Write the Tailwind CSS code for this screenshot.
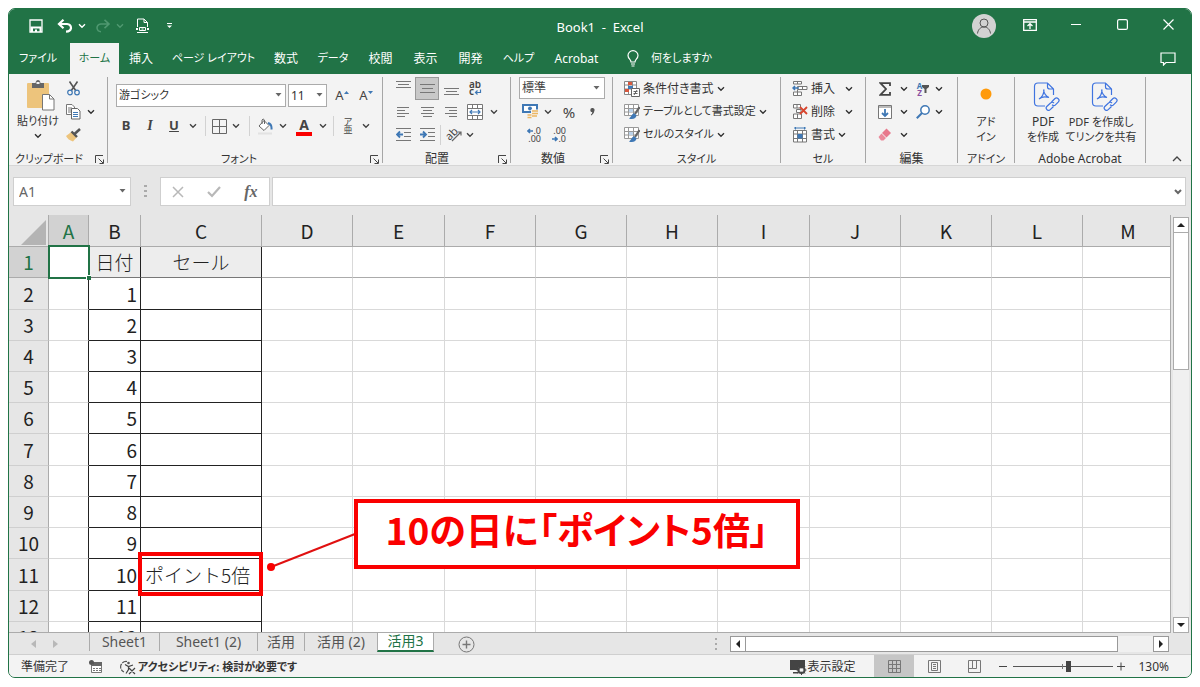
<!DOCTYPE html>
<html lang="ja">
<head>
<meta charset="utf-8">
<title>Book1 - Excel</title>
<script src="https://cdn.jsdelivr.net/npm/@tailwindcss/browser@4"></script>
</head>
<body class="flex h-screen flex-col bg-white px-2 pt-2 pb-[9px] text-xs text-[#333] font-['Noto_Sans','Noto_Sans_CJK_JP',sans-serif] [font-feature-settings:'palt']">

<svg class="hidden">
  <symbol id="chev" viewBox="0 0 8 6"><path d="M1 1.2 4 4.2 7 1.2" fill="none" stroke="currentColor" stroke-width="1.4"/></symbol>
  <symbol id="launch" viewBox="0 0 9 9"><path d="M.5 8V.5H8M3.500 3.500 8 8M8.500 4.500V8.500H4.500" fill="none" stroke="#444"/></symbol>
  <symbol id="tri" viewBox="0 0 7 4"><path d="M.5 0H6.500L3.500 3.500Z" fill="#666"/></symbol>
  <symbol id="tablefmt" viewBox="0 0 16 16"><path d="M.5 .5H14.500V11.500H.5ZM.5 4.500H14.500M.5 8H14.500M4.500 .5V11.500M9.500 .5V11.500" fill="#fff" stroke="#999"/><rect x="5" y="5" width="4" height="3" fill="#bcd3ea"/><path d="M15.500 3 11 10" stroke="#666" stroke-width="2.200"/><path d="M10.500 9.500C8 9 8 12 5 14.500 8.500 16 12.500 14.500 12.500 11Z" fill="#3f78b5"/></symbol>
  <symbol id="pdf" viewBox="0 0 27 29"><g fill="none" stroke="#3f74e0" stroke-width="1.200"><path d="M12 24H5Q1.500 24 1.500 20.500V4.500Q1.500 1 5 1H14.500L20.500 7V13M14.500 1V5Q14.500 7 17 7H20.500"/><path d="M10.500 7.500Q11 13 16 15.500M11 7.500Q11 14 6 17M6 17Q10 13.500 16 15.500"/><path d="m18.500 20 3.500-3.500q1.500-1.300 3.200.2t.2 3.200L22.500 22.800q-1.500 1.500-3.500 0"/><path d="M21 21q-1.500-1.500-3.500 0L13.800 24.500q-1.500 1.700.2 3.200t3.200 0L20.500 24.500"/></g></symbol>
</svg>

<div class="flex min-h-0 flex-1 flex-col overflow-hidden rounded-[7px] border border-[#217346] bg-[#e6e6e6]">

  <!-- Title bar -->
  <header class="flex h-[34px] shrink-0 items-center bg-[#217346] text-white">
    <div class="flex flex-1 items-center">
      <button aria-label="上書き保存" class="ml-[15px] flex w-6 justify-center"><svg width="14" height="14" viewBox="0 0 14 14"><path d="M1 1H13V13H1Z" fill="none" stroke="#fff" stroke-width="1.300"/><path d="M1.500 7.500H12.500V13H10.500V9.500H4V13H1.500Z" fill="#fff"/><path d="M6 10.500H8V13H6Z" fill="#fff"/></svg></button>
      <button aria-label="元に戻す" class="ml-[6px] flex w-[22px] justify-center"><svg width="16" height="14" viewBox="0 0 16 14"><path d="M1.500 5H10Q14 5.500 14 9 13.500 12.500 9 12.700M6.500 .8 2 5 6.500 9.200" fill="none" stroke="#fff" stroke-width="2.200"/></svg></button>
      <button aria-label="元に戻す一覧" class="flex w-3 justify-center"><svg width="8" height="6"><use href="#chev"/></svg></button>
      <button aria-label="やり直し" class="ml-1 flex w-[22px] justify-center text-[#4f9870]"><svg width="16" height="14" viewBox="0 0 16 14"><path d="M14.500 5H6Q2 5.500 2 9 2.500 12.500 6 12.700M9.500 .8 14 5 9.500 9.200" fill="none" stroke="currentColor" stroke-width="1.600"/></svg></button>
      <button aria-label="やり直し一覧" class="flex w-3 justify-center text-[#4f9870]"><svg width="8" height="6"><use href="#chev"/></svg></button>
      <button aria-label="印刷プレビュー" class="ml-1 flex w-6 justify-center"><svg width="13" height="16" viewBox="0 0 13 16"><path d="M1.500 9V1H8L11.500 4.500V9M8 1V4.500H11.500" fill="none" stroke="#fff"/><path d="M0 10H2V12H0ZM11 10H13V12H11Z" fill="#fff"/><path d="M1 14.500H12" stroke="#fff"/><path d="M3.500 9.500H9.500V12.500H3.500ZM5.500 11H7.500" fill="none" stroke="#fff"/></svg></button>
      <button aria-label="クイック アクセス ツール バーのカスタマイズ" class="ml-[5px] flex w-5 justify-center"><svg width="7" height="6" viewBox="0 0 7 6"><path d="M1 .5H6" stroke="#fff"/><path d="M1 2.500H6L3.500 5Z" fill="#fff"/></svg></button>
    </div>
    <h1 class="pt-[3px] text-[13px] whitespace-pre">Book1  -  Excel</h1>
    <div class="flex flex-1 justify-end">
      <button aria-label="アカウント" class="flex w-[46px] items-center justify-center"><svg width="24" height="24" viewBox="0 0 24 24"><circle cx="12" cy="12" r="12" fill="#d2d2d2"/><circle cx="12" cy="9" r="4" fill="none" stroke="#555"/><path d="M5.500 19.500C6 15.500 8.500 13 12 13S18 15.500 18.500 19.500" fill="none" stroke="#555"/></svg></button>
      <button aria-label="リボンの表示オプション" class="-mt-[3px] flex w-[46px] items-center justify-center"><svg width="14" height="12" viewBox="0 0 14 12"><path d="M.7 .7H13.300V11.300H.7ZM.7 3H13.300M7 10V5M4.500 7 7 4.700 9.500 7" fill="none" stroke="#fff" stroke-width="1.300"/></svg></button>
      <button aria-label="最小化" class="-mt-[3px] flex w-[46px] items-center justify-center"><svg width="10" height="10"><path d="M0 4.500H10" stroke="#fff"/></svg></button>
      <button aria-label="最大化" class="-mt-[3px] flex w-[46px] items-center justify-center"><svg width="11" height="11"><rect x=".6" y=".6" width="9.800" height="9.800" rx="1.500" fill="none" stroke="#fff" stroke-width="1.200"/></svg></button>
      <button aria-label="閉じる" class="-mt-[3px] flex w-[46px] items-center justify-center"><svg width="11" height="11"><path d="M.5 .5 10.500 10.500M10.500 .5 .5 10.500" stroke="#fff" stroke-width="1.200"/></svg></button>
    </div>
  </header>

  <!-- Ribbon tabs -->
  <nav class="flex h-[31px] shrink-0 items-stretch bg-[#217346] text-xs text-white">
    <button class="w-[61px] pr-[3px] text-[11px]">ファイル</button>
    <button class="w-[49px] bg-[#f3f3f3] text-[11px] text-[#217346]">ホーム</button>
    <button class="w-11">挿入</button>
    <button class="w-[101px] text-[11px] whitespace-nowrap">ページ レイアウト</button>
    <button class="w-11">数式</button>
    <button class="w-[50px] text-[11px]">データ</button>
    <button class="w-[45px]">校閲</button>
    <button class="w-[45px]">表示</button>
    <button class="w-[45px]">開発</button>
    <button class="w-[51px] text-[11px]">ヘルプ</button>
    <button class="w-[65px]">Acrobat</button>
    <button class="ml-[18px] flex items-center gap-3 text-[11px]"><svg width="12" height="17" viewBox="0 0 12 17"><path d="M4 12C4 9.500 1 8.800 1 5.500A5 4.800 0 0 1 11 5.500C11 8.800 8 9.500 8 12ZM4 14H8M4.500 16H7.500" fill="none" stroke="#fff" stroke-width="1.200"/></svg>何をしますか</button>
    <button aria-label="コメント" class="mr-[15px] ml-auto"><svg width="16" height="14" viewBox="0 0 16 14"><path d="M1 1H15V10.500H6L3.500 13V10.500H1Z" fill="none" stroke="#fff" stroke-width="1.200"/></svg></button>
  </nav>

  <!-- Ribbon -->
  <section class="flex h-[92px] shrink-0 border-b border-[#d6d6d6] bg-[#f3f3f3] pt-[3px] [&>div]:h-[86px] [&>div]:shrink-0 [&>div]:border-r [&>div]:border-[#a6a6a6]">

    <div class="w-[99px]">
      <div class="flex h-[69px]">
        <button class="ml-1 flex w-[50px] flex-col items-center">
          <svg class="mt-[3px] ml-[6px]" width="28" height="31" viewBox="0 0 28 31"><rect x="0" y="3" width="22" height="25" rx="1" fill="#edc47c"/><path d="M5 8V3H8.500Q9 0 11 0T13.500 3H17V8Z" fill="#666"/><rect x="9.500" y="2" width="3" height="2" fill="#f3f3f3"/><path d="M15.500 14.500H22.500L27 19V30H15.500Z" fill="#fff" stroke="#777"/><path d="M22.500 14.500V19H27" fill="none" stroke="#777"/></svg>
          <span class="text-[11px] leading-5">貼り付け</span>
          <svg class="mt-[2px]" width="8" height="6"><use href="#chev"/></svg>
        </button>
        <div class="grid w-5 grid-rows-3 place-items-center">
          <button aria-label="切り取り"><svg width="13" height="15" viewBox="0 0 13 15"><path d="M2.500 .5 9 10M10.500 .5 4 10" stroke="#555" stroke-width="1.600"/><circle cx="3" cy="11.500" r="2.300" fill="none" stroke="#3f78b5" stroke-width="1.200"/><circle cx="10" cy="11.500" r="2.300" fill="none" stroke="#3f78b5" stroke-width="1.200"/></svg></button>
          <button aria-label="コピー"><svg width="15" height="16" viewBox="0 0 15 16"><path d="M.5 .5H6L8.500 3V10.500H.5ZM2 4H6M2 6H5M2 8H5" fill="#fff" stroke="#777"/><path d="M5.500 4.500H11.500L14 7V15H5.500Z" fill="#fff" stroke="#666"/><path d="M7 8.500H12M7 10.500H12M7 12.500H12" stroke="#3f78b5"/></svg></button>
          <button aria-label="書式のコピー"><svg width="15" height="14" viewBox="0 0 15 14"><path d="M0 8 6 3.500 11 9 7 13.500Q2 12 0 8Z" fill="#edc47c"/><path d="M5.500 3.500 11 9" stroke="#555" stroke-width="2.400"/><path d="M8.500 6 14 1" stroke="#555" stroke-width="2.500"/></svg></button>
        </div>
        <button aria-label="コピーのオプション" class="w-[14px] pl-1"><svg width="8" height="6"><use href="#chev"/></svg></button>
      </div>
      <div class="flex items-center pt-[3px] text-[11px] leading-[20px]"><span class="w-[80px] text-center">クリップボード</span><button aria-label="クリップボードの設定" class="ml-[6px]"><svg width="9" height="9"><use href="#launch"/></svg></button></div>
    </div>

    <div class="w-[275px]">
      <div class="flex h-[69px] flex-col pt-[7px]">
        <div class="flex h-[23px] items-center gap-[2px] pl-2">
          <label class="relative"><select aria-label="フォント" class="h-[23px] w-[170px] appearance-none border border-[#ababab] bg-white pl-[2px] text-[11px]"><option>游ゴシック</option></select><svg class="pointer-events-none absolute top-[9px] right-1" width="7" height="4"><use href="#tri"/></svg></label>
          <label class="relative"><select aria-label="フォント サイズ" class="h-[23px] w-[39px] appearance-none border border-[#ababab] bg-white pl-[2px]"><option>11</option></select><svg class="pointer-events-none absolute top-[9px] right-1" width="7" height="4"><use href="#tri"/></svg></label>
          <button aria-label="フォント サイズの拡大" class="ml-[2px] flex w-[22px] justify-center text-[13px] text-[#444]">A<svg class="mt-1" width="5" height="4"><path d="M0 3 2.500 0 5 3Z" fill="#3f78b5"/></svg></button>
          <button aria-label="フォント サイズの縮小" class="flex w-[22px] justify-center text-[13px] text-[#444]">A<svg class="mt-1" width="5" height="4"><path d="M0 0 2.500 3 5 0Z" fill="#3f78b5"/></svg></button>
        </div>
        <div class="mt-[7px] flex h-6 items-center pl-[6px] text-[#444] [&>button]:flex [&>button]:justify-center">
          <button aria-label="太字" class="w-6 text-[13px] font-bold">B</button>
          <button aria-label="斜体" class="w-6 font-['Liberation_Serif',serif] text-[14px] font-bold italic">I</button>
          <button aria-label="下線" class="w-6 text-[13px] font-bold underline">U</button>
          <button aria-label="下線のオプション" class="w-[14px]"><svg width="8" height="6"><use href="#chev"/></svg></button>
          <span class="mx-[5px] h-5 w-px bg-[#d2d2d2]"></span>
          <button aria-label="罫線" class="w-4"><svg width="15" height="15"><path d="M.5 .5H14.500V14.500H.5ZM7.500 .5V14.500M.5 7.500H14.500" fill="none" stroke="#666"/></svg></button>
          <button aria-label="罫線のオプション" class="w-[18px]"><svg width="8" height="6"><use href="#chev"/></svg></button>
          <span class="mx-[4px] h-5 w-px bg-[#d2d2d2]"></span>
          <button aria-label="塗りつぶしの色" class="w-[22px]"><svg width="15" height="17" viewBox="0 0 15 17"><path d="M1 8 6 2.500 11 7.500 6 12.500Z" fill="#fff" stroke="#666"/><path d="M4 6V2Q5 0 6.500 2V6" fill="none" stroke="#666"/><path d="M10 5Q14 6 13.500 11.500" fill="none" stroke="#3f78b5" stroke-width="2"/><path d="M0 15.500H14" stroke="#e2e2e2" stroke-width="2"/></svg></button>
          <button aria-label="塗りつぶしのオプション" class="w-[14px]"><svg width="8" height="6"><use href="#chev"/></svg></button>
          <button aria-label="フォントの色" class="w-7"><span class="w-4 border-b-4 border-[#fa0000] text-center text-sm leading-[15px] font-bold">A</span></button>
          <button aria-label="フォントの色のオプション" class="w-[10px]"><svg width="8" height="6"><use href="#chev"/></svg></button>
          <span class="mx-[5px] h-5 w-px bg-[#d2d2d2]"></span>
          <button aria-label="ふりがな" class="w-[18px] flex-col items-center text-[9px] leading-[8px]"><span>ア</span><span>亜</span></button>
          <button aria-label="ふりがなのオプション" class="w-[18px]"><svg width="8" height="6"><use href="#chev"/></svg></button>
        </div>
      </div>
      <div class="flex items-center pt-[3px] text-[11px] leading-[20px]"><span class="flex-1 text-center">フォント</span><button aria-label="フォントの設定" class="mr-[3px]"><svg width="9" height="9"><use href="#launch"/></svg></button></div>
    </div>

    <div class="w-[128px]">
      <div class="grid h-[69px] grid-rows-3 pl-2 text-[#444] [&>div]:flex [&>div]:items-center [&_button]:flex [&_button]:w-6 [&_button]:justify-center">
        <div>
          <button aria-label="上揃え"><svg width="15" height="15"><path d="M0 .5H15M2 3.500H13M0 6.500H15" stroke="#777"/></svg></button>
          <button aria-label="上下中央揃え" aria-pressed="true" class="h-[23px] items-center border border-[#999] bg-[#c8c8c8]"><svg width="15" height="15"><path d="M0 3.500H15M2 7.500H13M0 11.500H15" stroke="#777"/></svg></button>
          <button aria-label="下揃え"><svg width="15" height="15"><path d="M0 7.500H15M2 10.500H13M0 13.500H15" stroke="#777"/></svg></button>
          <button aria-label="折り返して全体を表示する"><svg width="14" height="16" viewBox="0 0 14 16"><text x="1" y="7" font-size="10" font-weight="600" fill="#444">ab</text><text x="1" y="14" font-size="10" font-weight="600" fill="#444">c</text><path d="M12.500 8.500V11.500H7.500M9.500 9.500 7.500 11.500 9.500 13.500" fill="none" stroke="#3f78b5" stroke-width="1.200"/></svg></button>
        </div>
        <div>
          <button aria-label="左揃え"><svg width="12" height="12"><path d="M0 1.500H12M0 4.500H8M0 7.500H12M0 10.500H8" stroke="#777"/></svg></button>
          <button aria-label="中央揃え"><svg width="13" height="12"><path d="M0 1.500H13M2 4.500H11M0 7.500H13M2 10.500H11" stroke="#777"/></svg></button>
          <button aria-label="右揃え"><svg width="12" height="12"><path d="M0 1.500H12M4 4.500H12M0 7.500H12M4 10.500H12" stroke="#777"/></svg></button>
          <button aria-label="セルを結合して中央揃え"><svg width="16" height="16"><path d="M.5 .5H15.500V15.500H.5ZM.5 4.500H15.500M.5 11.500H15.500M5.500 .5V4.500M10.500 .5V4.500M5.500 11.500V15.500M10.500 11.500V15.500" fill="#fff" stroke="#777"/><path d="M3 8H13M5 6 3 8 5 10M11 6 13 8 11 10" fill="none" stroke="#3f78b5" stroke-width="1.200"/></svg></button>
          <span class="pl-[3px]"><svg width="8" height="6"><use href="#chev"/></svg></span>
        </div>
        <div>
          <button aria-label="インデントを減らす"><svg width="15" height="13"><path d="M0 .5H15M8 4.500H15M8 8.500H15M0 12.500H15" stroke="#777"/><path d="M7 6.500H1M4 3.500 1 6.500 4 9.500" fill="none" stroke="#3f78b5" stroke-width="1.800"/></svg></button>
          <button aria-label="インデントを増やす"><svg width="15" height="13"><path d="M0 .5H15M8 4.500H15M8 8.500H15M0 12.500H15" stroke="#777"/><path d="M0 6.500H6M3 3.500 6 6.500 3 9.500" fill="none" stroke="#3f78b5" stroke-width="1.800"/></svg></button>
          <span class="mx-px h-5 w-px bg-[#d2d2d2]"></span>
          <button aria-label="方向"><svg class="overflow-visible" width="17" height="15" viewBox="0 0 17 15"><text x="-1" y="11" font-size="11" fill="#444" transform="rotate(-45 5 7)">ab</text><path d="M6 14 15 5M11.500 5H15V8.500" fill="none" stroke="#666" stroke-width="1.200"/></svg></button>
          <svg width="8" height="6"><use href="#chev"/></svg>
        </div>
      </div>
      <div class="flex items-center pt-[3px] leading-[20px]"><span class="w-[108px] text-center">配置</span><button aria-label="配置の設定" class="mr-[3px] ml-auto"><svg width="9" height="9"><use href="#launch"/></svg></button></div>
    </div>

    <div class="w-[102px]">
      <div class="grid h-[69px] grid-rows-3 pl-2 text-[#444] [&>div]:flex [&>div]:items-center">
        <label class="relative"><select aria-label="表示形式" class="h-[22px] w-[86px] appearance-none border border-[#ababab] bg-white pl-[2px]"><option>標準</option></select><svg class="pointer-events-none absolute top-[9px] right-3" width="7" height="4"><use href="#tri"/></svg></label>
        <div>
          <button aria-label="通貨表示形式" class="flex w-[22px] justify-center"><svg width="16" height="15" viewBox="0 0 16 15"><rect x="1" y="1" width="14" height="7" fill="#fff" stroke="#3f78b5" stroke-width="2"/><circle cx="8" cy="4.500" r="2" fill="#3f78b5"/><path d="M9 5.500H16V14H5V9H9Z" fill="#f3f3f3"/><path d="M10 7H16M10 9.500H16M5.500 11H9.500M10 12H15M5.500 13.500H9.500" stroke="#edb661" stroke-width="1.600"/></svg></button>
          <svg class="ml-[3px]" width="8" height="6"><use href="#chev"/></svg>
          <button aria-label="パーセント スタイル" class="w-[34px] text-[15px] leading-5">%</button>
          <button aria-label="桁区切りスタイル" class="flex w-3 justify-center"><svg width="5" height="8" viewBox="0 0 5 8"><path d="M2.500 0A2 2 0 0 1 4.500 2.500Q4.300 5.500 1.500 7.500L.8 6.700Q2.300 5.500 2.300 4.200A2 2 0 0 1 2.500 0Z" fill="#555"/></svg></button>
        </div>
        <div>
          <button aria-label="小数点以下の表示桁数を増やす" class="w-[22px] text-right text-[9px] leading-[8px]"><span class="flex items-center justify-end"><svg width="6" height="6"><path d="M6 3H1M3 1 1 3 3 5" fill="none" stroke="#3f78b5" stroke-width="1.600"/></svg>.0</span>.00</button>
          <button aria-label="小数点以下の表示桁数を減らす" class="ml-[3px] w-[22px] text-right text-[9px] leading-[8px]">.00<span class="flex items-center justify-end"><svg width="6" height="6"><path d="M0 3H5M3 1 5 3 3 5" fill="none" stroke="#3f78b5" stroke-width="1.600"/></svg>.0</span></button>
        </div>
      </div>
      <div class="flex items-center pt-[3px] leading-[20px]"><span class="w-[84px] text-center">数値</span><button aria-label="数値の設定" class="mr-[3px] ml-auto"><svg width="9" height="9"><use href="#launch"/></svg></button></div>
    </div>

    <div class="w-[168px]">
      <div class="grid h-[69px] grid-rows-3 pl-[11px] [&>button]:flex [&>button]:items-center [&>button]:gap-[3px]">
        <button><svg width="16" height="16" viewBox="0 0 16 16"><path d="M.5 .5H12.500V13.500H.5ZM.5 4H12.500M.5 8H12.500M4.500 .5V13.500M8.500 .5V13.500" fill="#fff" stroke="#888"/><path d="M4 1H8V4H4ZM1 8H5V11H1Z" fill="#d8583e"/><path d="M4 5H9V8H4Z" fill="#3f78b5"/><path d="M7.500 7.500H15.500V15.500H7.500ZM9.500 10.500H13.500M9.500 12.500H13.500M13 9 10 14" fill="#fff" stroke="#666"/></svg>条件付き書式<svg width="8" height="6"><use href="#chev"/></svg></button>
        <button class="text-[11px]"><svg width="16" height="16"><use href="#tablefmt"/></svg>テーブルとして書式設定<svg width="8" height="6"><use href="#chev"/></svg></button>
        <button class="text-[11px]"><svg width="16" height="16"><use href="#tablefmt"/></svg>セルのスタイル<svg width="8" height="6"><use href="#chev"/></svg></button>
      </div>
      <div class="pt-[3px] text-center text-[11px] leading-[20px]">スタイル</div>
    </div>

    <div class="w-[85px]">
      <div class="grid h-[69px] grid-rows-3 pl-[11px] [&>button]:flex [&>button]:items-center [&>button]:gap-[3px]">
        <button><svg width="16" height="15" viewBox="0 0 16 15"><path d="M1.500 .5H9.500V3H1.500ZM5.500 .5V3M5.500 5.500H15V8.500H5.500ZM10.500 5.500V8.500M1.500 11H9.500V14.500H1.500ZM5.500 9V14.500" fill="#fff" stroke="#777"/><path d="M7 7H1M3 5 1 7 3 9" fill="none" stroke="#3f78b5" stroke-width="1.500"/></svg>挿入<svg class="ml-[7px]" width="8" height="6"><use href="#chev"/></svg></button>
        <button><svg width="16" height="15" viewBox="0 0 16 15"><path d="M1.500 .5H8.500V4H1.500ZM5 .5V4M4.500 5.500H9V8.500H4.500ZM1.500 10H9.500V14.500H1.500ZM5.500 10V14.500" fill="#fff" stroke="#777"/><path d="M8 3 15 10M15 3 8 10" stroke="#d8452e" stroke-width="1.800"/></svg>削除<svg class="ml-[7px]" width="8" height="6"><use href="#chev"/></svg></button>
        <button><svg width="16" height="16" viewBox="0 0 16 16"><path d="M2 1H14M3.500 0V2.500M12.500 0V2.500" stroke="#3f78b5"/><path d="M1.500 3.500H14.500V15H1.500ZM1.500 7H14.500M1.500 11.500H14.500M5.500 3.500V15M10.500 3.500V15" fill="#fff" stroke="#777"/><path d="M5.500 7H10.500V11.500H5.500Z" fill="#3f78b5"/></svg>書式<svg width="8" height="6"><use href="#chev"/></svg></button>
      </div>
      <div class="pt-[3px] text-center text-[11px] leading-[20px]">セル</div>
    </div>

    <div class="w-[92px]">
      <div class="grid h-[69px] grid-cols-[24px_14px_24px_8px] grid-rows-3 place-items-center justify-start pl-[7px]">
        <button aria-label="オート SUM"><svg width="12" height="14" viewBox="0 0 12 14"><path d="M11 4V1.200H1.500L7 7 1.500 12.800H11V10" fill="none" stroke="#444" stroke-width="1.800"/></svg></button>
        <svg width="8" height="6"><use href="#chev"/></svg>
        <button aria-label="並べ替えとフィルター" class="flex items-center"><span class="flex flex-col text-[8px] leading-[7px] font-bold"><span class="text-[#3f78b5]">A</span><span class="text-[#8a4fa0]">Z</span></span><svg width="7" height="8"><path d="M0 0H7V2L4.500 4V8H2.500V4L0 2Z" fill="#555"/></svg></button>
        <svg width="8" height="6"><use href="#chev"/></svg>
        <button aria-label="フィル"><svg width="14" height="14"><path d="M.5 .5H13.500V13.500H.5ZM.5 2H13.500" fill="#fff" stroke="#777"/><path d="M7 4V11M4 8 7 11 10 8" fill="none" stroke="#3f78b5" stroke-width="1.800"/></svg></button>
        <svg width="8" height="6"><use href="#chev"/></svg>
        <button aria-label="検索と選択"><svg width="14" height="14"><circle cx="9" cy="5" r="4.200" fill="#fff" stroke="#3f78b5" stroke-width="1.500"/><path d="M6 8 .8 13.200" stroke="#3f78b5" stroke-width="2"/></svg></button>
        <svg width="8" height="6"><use href="#chev"/></svg>
        <button aria-label="クリア"><svg width="14" height="13"><path d="M8.500 .5 13 5 8.500 9.500 4 5Z" fill="#e8788c"/><path d="M3.500 5.500 8 10 5.500 12.500H3L.5 9Z" fill="#eb8a9b"/></svg></button>
        <svg width="8" height="6"><use href="#chev"/></svg>
      </div>
      <div class="pt-[3px] text-center leading-[20px]">編集</div>
    </div>

    <div class="w-[57px]">
      <button class="flex h-[69px] w-full flex-col items-center text-[11px] leading-[15px]"><svg class="mt-[11px] mb-[14px]" width="12" height="12"><circle cx="6" cy="6" r="5.500" fill="#ff9a0a"/></svg><span>アド</span><span>イン</span></button>
      <div class="pt-[3px] text-center text-[11px] leading-[20px]">アドイン</div>
    </div>

    <div class="w-[131px]">
      <div class="flex h-[69px] leading-[15px] whitespace-nowrap">
        <button class="flex w-14 flex-col items-center text-[11px]"><svg class="mt-[5px] mb-[3px] ml-[6px] shrink-0" width="27" height="29"><use href="#pdf"/></svg><span class="text-xs leading-[15px]">PDF</span><span>を作成</span></button>
        <button class="flex w-[60px] flex-col items-center text-[11px]"><svg class="mt-[5px] mb-[3px] ml-[6px] shrink-0" width="27" height="29"><use href="#pdf"/></svg><span>PDF を作成し</span><span>てリンクを共有</span></button>
      </div>
      <div class="pt-[3px] text-center leading-[20px]">Adobe Acrobat</div>
    </div>

    <button aria-label="リボンを折りたたむ" class="mr-[9px] ml-auto self-end pb-[2px]"><svg width="10" height="8"><path d="M1 6 5 2 9 6" fill="none" stroke="#444" stroke-width="1.300"/></svg></button>
  </section>

  <!-- Formula bar -->
  <section class="flex h-[49px] shrink-0 items-start pt-[11px] pr-[5px] pl-1">
    <label class="relative"><input aria-label="名前ボックス" value="A1" class="h-[29px] w-[118px] border border-[#cfcfcf] bg-white pl-[5px] text-sm text-[#666]"><svg class="pointer-events-none absolute top-3 right-[5px]" width="7" height="4"><use href="#tri"/></svg></label>
    <svg class="mt-2 mr-[13px] ml-[13px]" width="3" height="12"><path d="M0 0H3V2H0ZM0 5H3V7H0ZM0 10H3V12H0Z" fill="#aaa"/></svg>
    <div class="flex h-[29px] w-[110px] items-center justify-around border border-[#cfcfcf] bg-white">
      <button aria-label="キャンセル"><svg width="12" height="12"><path d="M1 1 11 11M11 1 1 11" stroke="#b8b8b8" stroke-width="1.500"/></svg></button>
      <button aria-label="入力"><svg width="14" height="12"><path d="M1 6 5 10 13 1" fill="none" stroke="#b8b8b8" stroke-width="2.200"/></svg></button>
      <button aria-label="関数の挿入" class="font-['Liberation_Serif',serif] text-base font-bold text-[#666] italic">fx</button>
    </div>
    <div class="relative ml-[2px] flex-1"><input aria-label="数式バー" class="h-[29px] w-full border border-[#cfcfcf] bg-white px-1"><svg class="pointer-events-none absolute top-3 right-1" width="8" height="6" viewBox="0 0 8 6"><path d="M1 1 4 4 7 1" fill="none" stroke="#666" stroke-width="2"/></svg></div>
  </section>

  <!-- Worksheet -->
  <main class="relative flex min-h-0 flex-1">
    <div class="relative min-w-0 flex-1 overflow-hidden border-r border-b border-[#ababab]">
      <table class="w-[calc(100%+4px)] table-fixed border-separate border-spacing-0 font-['Noto_Sans_CJK_JP',sans-serif] text-[19px] font-light text-[#222] [font-feature-settings:normal]">
        <colgroup><col class="w-10"><col class="w-10"><col class="w-[52px]"><col class="w-[121px]"><col class="w-[91px]"><col class="w-[92px]"><col class="w-[91px]"><col class="w-[91px]"><col class="w-[91px]"><col class="w-[92px]"><col class="w-[91px]"><col class="w-[91px]"><col class="w-[91px]"><col></colgroup>
        <thead id="head"></thead>
        <tbody id="rows"></tbody>
      </table>

      <!-- Active cell -->
      <div class="absolute top-[30px] left-[39px] h-[34px] w-[42px] border-2 border-[#217346]"><span class="absolute -right-[3px] -bottom-[3px] size-[5px] border-t border-l border-white bg-[#217346]"></span></div>

      <!-- Annotation -->
      <div class="absolute top-[337px] left-[129px] h-[44px] w-[125px] border-4 border-[#fa0000]"></div>
      <svg class="absolute top-[315px] left-[256px]" width="92" height="44"><path d="M6 37 90 4" stroke="#e01010" stroke-width="2"/><circle cx="6" cy="37" r="4" fill="#fa0000"/></svg>
      <div class="absolute top-[284px] left-[345px] flex h-[70px] w-[446px] items-center justify-center border-4 border-[#fa0000] bg-white pb-2 font-['Noto_Sans_CJK_JP',sans-serif] text-[37px] font-bold whitespace-nowrap text-[#fa0000]">10の日に「ポイント5倍」</div>
    </div>

    <div class="flex w-5 flex-col pt-[2px] pr-[2px] pl-[2px]">
      <button aria-label="上へスクロール" class="flex h-4 w-full items-center justify-center border border-[#ababab] bg-white"><svg width="8" height="4"><path d="M0 4 4 0 8 4Z" fill="#222"/></svg></button>
      <div class="flex-1 bg-[#f0f0f0]"><div class="h-[137px] border border-t-0 border-[#ababab] bg-white"></div></div>
      <button aria-label="下へスクロール" class="flex h-4 w-full items-center justify-center border border-[#ababab] bg-white"><svg width="8" height="4"><path d="M0 0 4 4 8 0Z" fill="#222"/></svg></button>
    </div>
  </main>

  <!-- Sheet tabs -->
  <nav class="flex h-[22px] shrink-0 items-start border-b border-[#cfcfcf] text-sm text-[#555]">
    <div class="flex w-20 items-center gap-[17px] pt-[7px] pl-[22px]"><svg width="5" height="8"><path d="M5 0V8L0 4Z" fill="#b8b8b8"/></svg><svg width="5" height="8"><path d="M0 0V8L5 4Z" fill="#b8b8b8"/></svg></div>
    <button class="h-[18px] w-[70px] border-l border-[#ababab] leading-[16px]">Sheet1</button>
    <button class="h-[18px] w-[98px] border-l border-[#ababab] leading-[16px]">Sheet1 (2)</button>
    <button class="h-[18px] w-[47px] border-l border-[#ababab] leading-[16px]">活用</button>
    <button class="h-[18px] w-[73px] border-l border-[#ababab] leading-[16px]">活用 (2)</button>
    <button aria-current="page" class="-mt-px h-5 w-[57px] border-x border-b-2 border-x-[#ababab] border-b-[#217346] bg-white leading-[18px] text-[#217346]">活用3</button>
    <button aria-label="新しいシート" class="mt-[3px] ml-6"><svg width="17" height="17"><circle cx="8.500" cy="8.500" r="7.500" fill="none" stroke="#777"/><path d="M8.500 4.500V12.500M4.500 8.500H12.500" stroke="#777" stroke-width="1.400"/></svg></button>
    <svg class="mt-[5px] mr-3 ml-auto" width="3" height="12"><path d="M0 0H2V2H0ZM0 5H2V7H0ZM0 10H2V12H0Z" fill="#aaa"/></svg>
    <div class="mt-[3px] mr-[22px] flex h-4 w-[439px] bg-[#f0f0f0]">
      <button aria-label="左へスクロール" class="flex w-4 items-center justify-center border border-[#999] bg-white"><svg width="4" height="8"><path d="M4 0V8L0 4Z" fill="#222"/></svg></button>
      <div class="mr-[35px] flex-1 border border-l-0 border-[#999] bg-white"></div>
      <button aria-label="右へスクロール" class="flex w-4 items-center justify-center border border-[#999] bg-white"><svg width="4" height="8"><path d="M0 0V8L4 4Z" fill="#222"/></svg></button>
    </div>
  </nav>

  <!-- Status bar -->
  <footer class="flex h-[22px] shrink-0 items-center bg-[#f3f3f3] pl-3 text-xs whitespace-nowrap">
    <span class="w-[68px] pt-[2px]">準備完了</span>
    <button aria-label="マクロの記録"><svg width="13" height="13"><path d="M2.500 3.500H12.500V12.500H2.500ZM4 8.500H6M7 8.500H9M10 8.500H12M4 10.500H6M7 10.500H9M10 10.500H12" fill="#fff" stroke="#777"/><path d="M5 2H13V6H2.500Z" fill="#666"/><circle cx="2.500" cy="2.500" r="2.500" fill="#555"/></svg></button>
    <button class="ml-[18px] flex items-center gap-[2px] pt-[2px] text-[11px] font-bold"><svg width="16" height="15" viewBox="0 0 16 15"><path d="M7 1.500A5.500 5.500 0 0 0 4 12" fill="none" stroke="#555" stroke-width="1.200" stroke-dasharray="5 1"/><path d="M5 4.500 8.500 6.500 13 5M8.500 6.500V9.500L6 13.500M9 8 15 14M15 8 9 14" fill="none" stroke="#444" stroke-width="1.200"/><circle cx="8.500" cy="3" r="1.300" fill="#555"/></svg>アクセシビリティ: 検討が必要です</button>
    <button class="ml-auto flex items-center pt-[2px]"><svg width="17" height="15" viewBox="0 0 17 15"><path d="M0 0H15V7H8V10H0ZM3 12H8V13.500H3Z" fill="#444"/><circle cx="11.500" cy="10" r="3.200" fill="#f3f3f3" stroke="#444" stroke-width="1.800"/><path d="M11.500 5V15M6.500 10H16.500M8 6.500 15 13.500M15 6.500 8 13.500" stroke="#444"/><circle cx="11.500" cy="10" r="1.700" fill="#f3f3f3"/></svg>表示設定</button>
    <div class="ml-[19px] flex h-full [&>button]:flex [&>button]:w-10 [&>button]:items-center [&>button]:justify-center">
      <button aria-label="標準" class="bg-[#c6c6c6]"><svg width="13" height="13"><path d="M.5 .5H12.500V12.500H.5ZM4.500 .5V12.500M8.500 .5V12.500M.5 4.500H12.500M.5 8.500H12.500" fill="none" stroke="#777"/></svg></button>
      <button aria-label="ページ レイアウト"><svg width="13" height="13"><path d="M.5 .5H12.500V12.500H.5ZM3.500 2.500H9.500V10.500H3.500ZM5 4.500H8M5 6.500H8M5 8.500H8" fill="none" stroke="#777"/></svg></button>
      <button aria-label="改ページ プレビュー"><svg width="13" height="13"><path d="M.5 .5H12.500V12.500H.5ZM4.500 .5V8.500H.5M8.500 .5V8.500H4.500" fill="none" stroke="#777"/></svg></button>
    </div>
    <button aria-label="縮小" class="ml-[5px]"><svg width="8" height="9"><path d="M0 4.500H8" stroke="#444"/></svg></button>
    <div class="relative ml-[6px] flex items-center"><span class="absolute left-[49px] h-[5px] w-px bg-[#777]"></span><input type="range" aria-label="ズーム" min="0" max="100" value="55" class="h-3 w-[100px] appearance-none bg-transparent [&::-webkit-slider-runnable-track]:h-px [&::-webkit-slider-runnable-track]:bg-[#555] [&::-webkit-slider-thumb]:-mt-[5px] [&::-webkit-slider-thumb]:h-[11px] [&::-webkit-slider-thumb]:w-[5px] [&::-webkit-slider-thumb]:appearance-none [&::-webkit-slider-thumb]:bg-[#444]"></div>
    <button aria-label="拡大" class="ml-1"><svg width="8" height="9"><path d="M0 4.500H8M4 .5V8.500" stroke="#444"/></svg></button>
    <span class="mr-[22px] ml-[13px] pt-[2px]">130%</span>
  </footer>
</div>

<script>
  const letters = 'ABCDEFGHIJKLM'.split('');
  const corner = '<th class="h-8 border-r border-b border-[#ababab] p-0"><svg class="mt-[3px] ml-auto mr-[2px]" width="25" height="25"><path d="M25 0V25H0Z" fill="#b4b4b4"/></svg></th>';
  document.getElementById('head').innerHTML = '<tr>' + corner + letters.map((c, i) =>
    `<th scope="col" class="${i === 0
      ? 'h-8 border-r border-b border-[#ababab] bg-[#d2d2d2] p-0 font-normal text-[#217346]'
      : 'h-8 border-r border-b border-[#ababab] p-0 font-normal'}">${c}</th>`).join('') + '</tr>';

  const blank = '<td class="border-r border-b border-[#d9d9d9] bg-white"></td>';
  const tallRows = [2, 7, 11];
  let html = '';
  for (let r = 1; r <= 13; r++) {
    const height = tallRows.includes(r) ? 'h-8' : 'h-[31px]';
    const rest = r === 1 ? '<td class="border-r border-b border-r-[#d9d9d9] border-b-[#ababab] bg-white"></td>' : blank;
    html += `<tr class="${height} leading-[30px]">`;
    html += r === 1
      ? '<th scope="row" class="border-r border-b border-[#ababab] bg-[#d2d2d2] p-0 font-normal text-[#217346]">1</th>'
      : `<th scope="row" class="border-r border-b border-r-[#ababab] border-b-[#cfcfcf] p-0 font-normal">${r}</th>`;
    html += r === 1
      ? '<td class="border-r border-b border-r-[#222] bg-white"></td><td class="border-r border-b border-r-[#222] border-b-[#777] bg-[#ededed] p-0 text-center">日付</td><td class="border-r border-b border-r-[#222] border-b-[#777] bg-[#ededed] p-0 text-center">セール</td>'
      : `<td class="border-r border-b border-r-[#222] border-b-[#d9d9d9] bg-white"></td><td class="border-r border-b border-[#222] bg-white p-0 pr-[3px] text-right font-normal">${r - 1}</td><td class="border-r border-b border-[#222] bg-white p-0 pl-1 whitespace-nowrap">${r === 11 ? 'ポイント5倍' : ''}</td>`;
    html += rest.repeat(10) + '</tr>';
  }
  document.getElementById('rows').innerHTML = html;
</script>
</body>
</html>
